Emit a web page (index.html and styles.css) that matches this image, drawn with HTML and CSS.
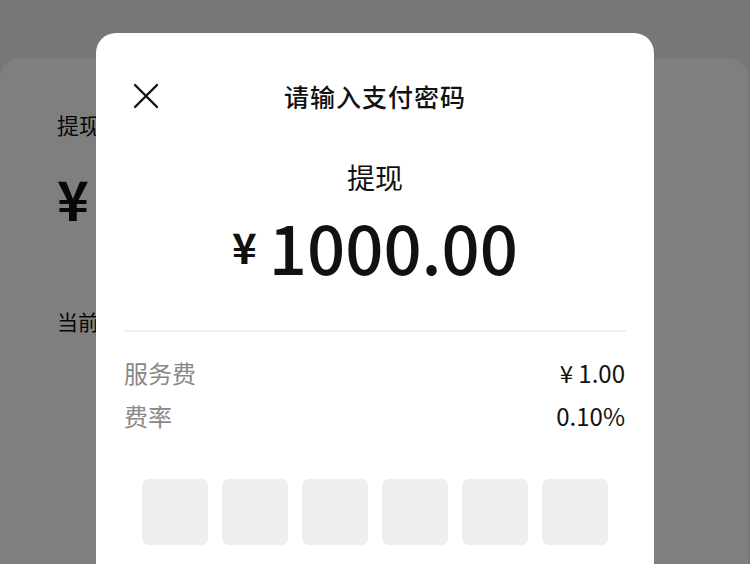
FILE: index.html
```html
<!DOCTYPE html>
<html lang="zh-CN">
<head>
    <meta charset="UTF-8">
    <meta name="viewport" content="width=device-width, initial-scale=1.0">
    <title>提现</title>
    <link rel="stylesheet" href="styles.css">
</head>
<body>

    <!-- Withdraw page behind the dialog -->
    <div class="page">
        <div class="card">
            <div class="card-label">提现</div>
            <div class="card-amount">¥</div>
            <div class="card-note">当前可提现余额</div>
        </div>
    </div>

    <div class="mask"></div>

    <!-- Payment password dialog -->
    <div class="dialog">
        <div class="dialog-header">
            <div class="close">
                <svg width="26" height="26" viewBox="0 0 26 26">
                    <path d="M2 2 L24 24 M24 2 L2 24" stroke="#111" stroke-width="2.4" stroke-linecap="round" fill="none"/>
                </svg>
            </div>
            <div class="dialog-title">请输入支付密码</div>
            <div></div>
        </div>

        <div class="summary">
            <div class="summary-label">提现</div>
            <div class="summary-amount"><span class="yen">¥</span>1000.00</div>
        </div>

        <div class="fees">
            <div class="fee-row">
                <span class="fee-name">服务费</span>
                <span class="fee-value">¥ 1.00</span>
            </div>
            <div class="fee-row">
                <span class="fee-name">费率</span>
                <span class="fee-value">0.10%</span>
            </div>
        </div>

        <div class="pin">
            <div class="pin-box"></div>
            <div class="pin-box"></div>
            <div class="pin-box"></div>
            <div class="pin-box"></div>
            <div class="pin-box"></div>
            <div class="pin-box"></div>
        </div>
    </div>

</body>
</html>
```

FILE: styles.css
```css
/* Base */
body {
    margin: 0;
    padding: 0;
    background-color: #eeeeee;
    font-family: "Noto Sans CJK SC", "Noto Sans", sans-serif;
    color: #111;
    overflow: hidden;
    height: 564px;
}

/* Page behind the dialog */
.page {
    padding-top: 58px;
}

.card {
    background-color: #ffffff;
    border-radius: 20px 20px 0 0;
    margin-right: 2px;
    height: 506px;
    padding: 50px 57px 0;
    box-sizing: border-box;
}

.card-label {
    font-size: 22px;
    line-height: 32px;
}

.card-amount {
    font-size: 54px;
    font-weight: 700;
    line-height: 60px;
    margin-top: 28px;
}

.card-note {
    font-size: 21px;
    line-height: 30px;
    margin-top: 78px;
}

/* Dim layer */
.mask {
    position: absolute;
    inset: 0;
    background-color: rgba(0, 0, 0, 0.5);
}

/* Dialog */
.dialog {
    position: absolute;
    top: 33px;
    left: 96px;
    width: 558px;
    height: 531px;
    overflow: hidden;
    background-color: #ffffff;
    border-radius: 20px 20px 0 0;
    padding: 0 28px;
    box-sizing: border-box;
}

.dialog-header {
    display: grid;
    grid-template-columns: 1fr auto 1fr;
    align-items: center;
    height: 36px;
    margin-top: 45px;
}

.close {
    display: flex;
    margin-left: 9px;
}

.dialog-title {
    font-size: 25px;
    font-weight: 500;
    letter-spacing: 1px;
}

.summary {
    text-align: center;
    border-bottom: 2px solid #f0f0f0;
    padding-bottom: 48px;
    margin-top: 43px;
}

.summary-label {
    font-size: 28px;
    line-height: 40px;
}

.summary-amount {
    font-size: 67px;
    font-weight: 500;
    line-height: 72px;
    margin-top: 13px;
}

.yen {
    font-size: 42px;
    font-weight: 700;
    margin-right: 12px;
    vertical-align: 11px;
}

.fees {
    padding-top: 19px;
}

.fee-row {
    display: flex;
    justify-content: space-between;
    align-items: center;
    height: 43px;
    font-size: 24px;
}

.fee-name {
    color: #888888;
}

.fee-value {
    font-size: 24px;
    color: #111;
    margin-right: 1px;
}

/* Password boxes */
.pin {
    display: flex;
    justify-content: center;
    gap: 14px;
    margin-top: 42px;
}

.pin-box {
    width: 66px;
    height: 66px;
    background-color: #eeeeee;
    border-radius: 7px;
}
```
